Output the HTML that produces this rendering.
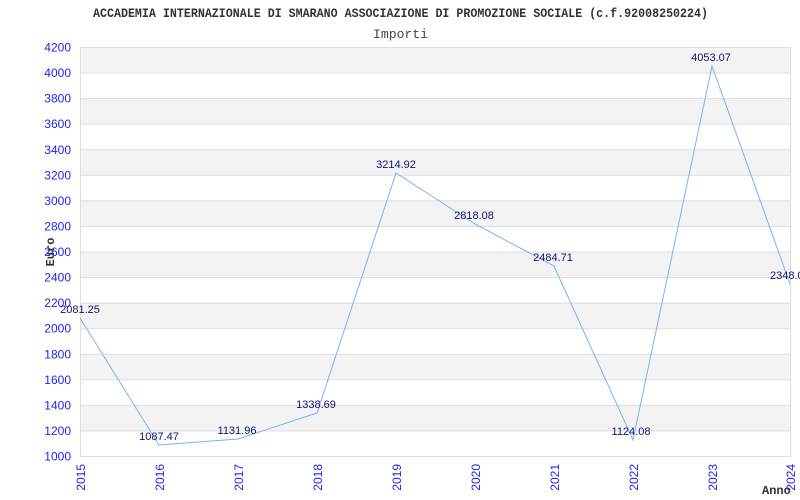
<!DOCTYPE html>
<html><head><meta charset="utf-8"><style>
html,body{margin:0;padding:0;background:#fff;width:800px;height:500px;overflow:hidden}
</style></head><body>
<svg width="800" height="500" xmlns="http://www.w3.org/2000/svg" font-family="Liberation Sans, sans-serif">
<rect width="800" height="500" fill="#fff"/>
<text x="93" y="17" font-family="Liberation Mono, monospace" font-weight="bold" font-size="13" fill="#333" textLength="615" lengthAdjust="spacingAndGlyphs">ACCADEMIA INTERNAZIONALE DI SMARANO ASSOCIAZIONE DI PROMOZIONE SOCIALE (c.f.92008250224)</text>
<text x="373" y="38" font-family="Liberation Mono, monospace" font-size="13" fill="#444" textLength="55" lengthAdjust="spacingAndGlyphs">Importi</text>
<g fill="#f3f3f3">
<rect x="81" y="47" width="709" height="25.6"/>
<rect x="81" y="98.1" width="709" height="25.6"/>
<rect x="81" y="149.3" width="709" height="25.6"/>
<rect x="81" y="200.4" width="709" height="25.6"/>
<rect x="81" y="251.5" width="709" height="25.6"/>
<rect x="81" y="302.6" width="709" height="25.6"/>
<rect x="81" y="353.8" width="709" height="25.6"/>
<rect x="81" y="404.9" width="709" height="25.6"/>
</g>
<g stroke="#dddddd" stroke-width="1">
<line x1="81" x2="790" y1="47.5" y2="47.5"/>
<line x1="81" x2="790" y1="73" y2="73"/>
<line x1="81" x2="790" y1="98.6" y2="98.6"/>
<line x1="81" x2="790" y1="124.2" y2="124.2"/>
<line x1="81" x2="790" y1="149.8" y2="149.8"/>
<line x1="81" x2="790" y1="175.3" y2="175.3"/>
<line x1="81" x2="790" y1="200.9" y2="200.9"/>
<line x1="81" x2="790" y1="226.5" y2="226.5"/>
<line x1="81" x2="790" y1="252" y2="252"/>
<line x1="81" x2="790" y1="277.6" y2="277.6"/>
<line x1="81" x2="790" y1="303.2" y2="303.2"/>
<line x1="81" x2="790" y1="328.7" y2="328.7"/>
<line x1="81" x2="790" y1="354.3" y2="354.3"/>
<line x1="81" x2="790" y1="379.9" y2="379.9"/>
<line x1="81" x2="790" y1="405.4" y2="405.4"/>
<line x1="81" x2="790" y1="431" y2="431"/>
<line x1="80.5" x2="790" y1="456.5" y2="456.5"/>
<line x1="80.5" x2="80.5" y1="47" y2="457"/>
<line x1="790.5" x2="790.5" y1="47" y2="457"/>
</g>
<g fill="#2222ee" font-size="12" text-anchor="end">
<text x="71" y="51.5">4200</text><text x="71" y="77">4000</text><text x="71" y="102.6">3800</text><text x="71" y="128.2">3600</text>
<text x="71" y="153.8">3400</text><text x="71" y="179.3">3200</text><text x="71" y="204.9">3000</text><text x="71" y="230.5">2800</text>
<text x="71" y="256">2600</text><text x="71" y="281.6">2400</text><text x="71" y="307.2">2200</text><text x="71" y="332.7">2000</text>
<text x="71" y="358.3">1800</text><text x="71" y="383.9">1600</text><text x="71" y="409.4">1400</text><text x="71" y="435">1200</text>
<text x="71" y="460.5">1000</text>
</g>
<g fill="#2222ee" font-size="12" text-anchor="end">
<text transform="translate(85,464) rotate(-90)">2015</text>
<text transform="translate(164,464) rotate(-90)">2016</text>
<text transform="translate(243,464) rotate(-90)">2017</text>
<text transform="translate(322,464) rotate(-90)">2018</text>
<text transform="translate(401,464) rotate(-90)">2019</text>
<text transform="translate(480,464) rotate(-90)">2020</text>
<text transform="translate(559,464) rotate(-90)">2021</text>
<text transform="translate(638,464) rotate(-90)">2022</text>
<text transform="translate(717,464) rotate(-90)">2023</text>
<text transform="translate(795,464) rotate(-90)">2024</text>
</g>
<text transform="translate(54,252) rotate(-90)" text-anchor="middle" font-family="Liberation Mono, monospace" font-weight="bold" font-size="12" fill="#333">Euro</text>
<text x="762" y="494" font-family="Liberation Mono, monospace" font-weight="bold" font-size="12" fill="#333">Anno</text>
<polyline fill="none" stroke="#77b3f0" stroke-width="1" points="80,318 159,445 238,439 317,413 396,173 475,224 554,266 633,440 712,66 790,284"/>
<g fill="#111177" font-size="11" text-anchor="middle">
<text x="80" y="313">2081.25</text>
<text x="159" y="440">1087.47</text>
<text x="237" y="434">1131.96</text>
<text x="316" y="408">1338.69</text>
<text x="396" y="168">3214.92</text>
<text x="474" y="219">2818.08</text>
<text x="553" y="261">2484.71</text>
<text x="631" y="435">1124.08</text>
<text x="711" y="61">4053.07</text>
<text x="770" y="279" text-anchor="start">2348.0</text>
</g>
</svg>
</body></html>
